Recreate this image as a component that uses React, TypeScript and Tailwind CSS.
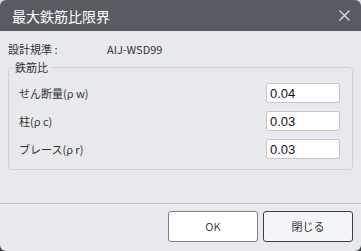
const rows = [
  { label: "せん断量(ρ w)", value: "0.04" },
  { label: "柱(ρ c)", value: "0.03" },
  { label: "ブレース(ρ r)", value: "0.03" },
];

const font = { fontFamily: '"Noto Sans CJK JP", "Liberation Sans", sans-serif' };

export default function App() {
  return (
    <div className="w-[361px] h-[251px] bg-gradient-to-b from-[#d9dbdf] to-[#3a3d42]" style={font}>
      <div className="w-full h-full flex flex-col bg-[#e8e9ed] rounded-[6px] overflow-hidden">
        {/* title bar */}
        <div className="h-[31px] shrink-0 bg-[#575c63] flex items-center justify-between pl-[12px] pr-[11px]">
          <span className="text-[14px] text-white leading-none">最大鉄筋比限界</span>
          <svg width="11" height="11" viewBox="0 0 11 11" className="text-[#e4e6ea]">
            <path d="M0.5 0.5 L10.5 10.5 M10.5 0.5 L0.5 10.5" stroke="currentColor" strokeWidth="1.1" />
          </svg>
        </div>

        {/* body */}
        <div className="flex-1 px-[8px] pt-[11px]">
          <div className="flex items-center text-[11px] text-[#333] h-[14px]">
            <span className="w-[99px]">設計規準 :</span>
            <span>AIJ-WSD99</span>
          </div>
          <fieldset className="mt-[4px] h-[110px] border border-[#cfd1d6] rounded-[4px] pl-[10px] pr-[12px] pt-[2px]">
            <legend className="px-[2px] ml-[-6px] text-[11px] text-[#333] leading-[14px]">鉄筋比</legend>
            <div className="flex flex-col gap-[8px] mt-[7px]">
              {rows.map((r) => (
                <div key={r.label} className="flex items-center justify-between">
                  <span className="text-[11px] text-[#333]">{r.label}</span>
                  <input
                    readOnly
                    value={r.value}
                    className="w-[74px] h-[20px] bg-white border border-[#c3c6cc] rounded-[2px] px-[3px] text-[13px] text-[#111] outline-none"
                    style={{ fontFamily: '"Liberation Sans", sans-serif' }}
                  />
                </div>
              ))}
            </div>
          </fieldset>
        </div>

        {/* footer */}
        <div className="h-[48px] shrink-0 border-t border-[#c3c5ca] flex items-start justify-end gap-[5px] pt-[7px] pr-[8px]">
          <button className="w-[90px] h-[31px] bg-white border border-[#7d8087] rounded-[3px] text-[11px] text-[#444]">OK</button>
          <button className="w-[90px] h-[31px] bg-[#f4f5f8] border border-[#3c3f45] rounded-[3px] text-[11px] text-[#333]">閉じる</button>
        </div>
      </div>
    </div>
  );
}
